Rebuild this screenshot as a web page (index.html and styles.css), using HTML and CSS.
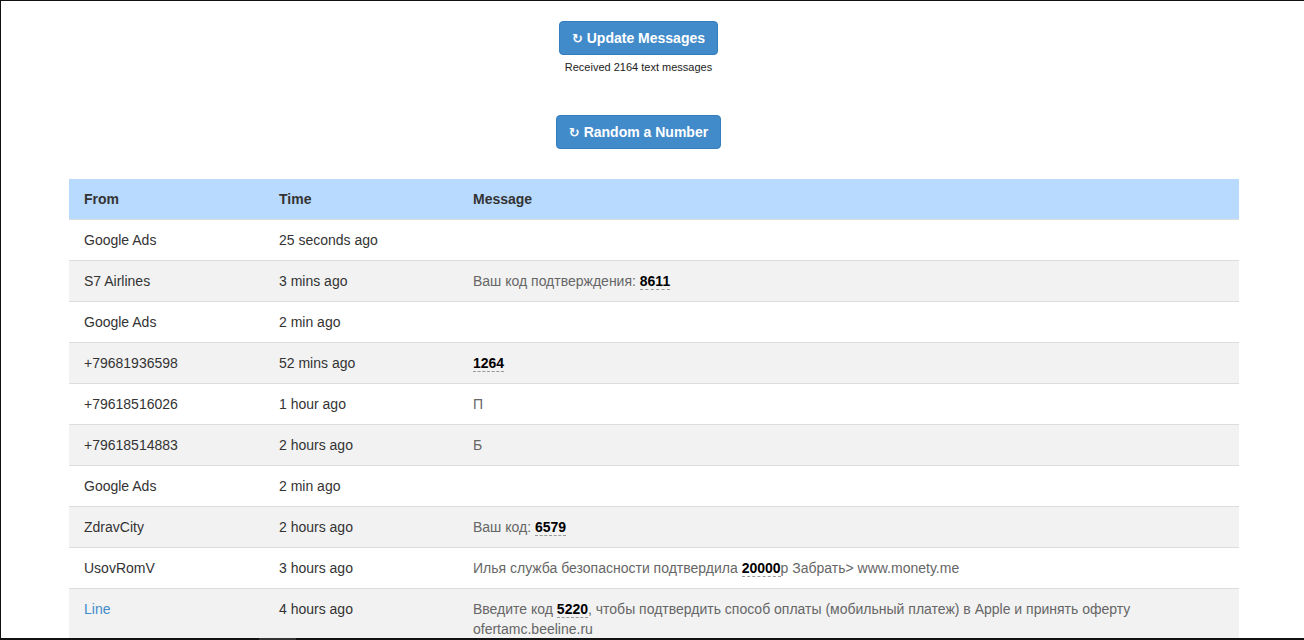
FILE: index.html
```html
<!DOCTYPE html>
<html lang="en">
<head>
<meta charset="utf-8">
<title>Messages</title>
<link rel="stylesheet" href="styles.css">
</head>
<body>
<div class="frame"><span class="thumb"></span></div>
<div class="actions">
  <button class="btn" type="button"><span class="ico">↻</span> Update Messages</button>
  <p class="count">Received 2164 text messages</p>
  <button class="btn btn-random" type="button"><span class="ico">↻</span> Random a Number</button>
</div>
<div class="wrap">
  <table class="msgs">
    <thead>
      <tr><th class="c-from">From</th><th class="c-time">Time</th><th>Message</th></tr>
    </thead>
    <tbody>
      <tr><td>Google Ads</td><td>25 seconds ago</td><td class="m"></td></tr>
      <tr><td>S7 Airlines</td><td>3 mins ago</td><td class="m">Ваш код подтверждения: <b class="code">8611</b></td></tr>
      <tr><td>Google Ads</td><td>2 min ago</td><td class="m"></td></tr>
      <tr><td>+79681936598</td><td>52 mins ago</td><td class="m"><b class="code">1264</b></td></tr>
      <tr><td>+79618516026</td><td>1 hour ago</td><td class="m">П</td></tr>
      <tr><td>+79618514883</td><td>2 hours ago</td><td class="m">Б</td></tr>
      <tr><td>Google Ads</td><td>2 min ago</td><td class="m"></td></tr>
      <tr><td>ZdravCity</td><td>2 hours ago</td><td class="m">Ваш код: <b class="code">6579</b></td></tr>
      <tr><td>UsovRomV</td><td>3 hours ago</td><td class="m">Илья служба безопасности подтвердила <b class="code">20000</b>р Забрать&gt; www.monety.me</td></tr>
      <tr><td><a class="link" href="#">Line</a></td><td>4 hours ago</td><td class="m">Введите код <b class="code">5220</b>, чтобы подтвердить способ оплаты (мобильный платеж) в Apple и принять оферту ofertamc.beeline.ru</td></tr>
    </tbody>
  </table>
</div>
</body>
</html>
```

FILE: styles.css
```css
html, body {
  margin: 0;
  padding: 0;
  background: #fff;
}
body {
  font-family: "Liberation Sans", Arial, "DejaVu Sans", sans-serif;
  font-size: 14px;
  line-height: 20px;
  color: #333;
  overflow: hidden;
  height: 640px;
}
.frame {
  position: fixed;
  inset: 0;
  border-top: 1px solid #111;
  border-left: 1px solid #111;
  border-bottom: 2px solid #111;
  pointer-events: none;
  z-index: 10;
}
.thumb {
  position: absolute;
  left: 258px;
  bottom: -2px;
  width: 37px;
  height: 2px;
  background: #333;
}
.actions {
  display: flex;
  flex-direction: column;
  align-items: center;
  padding: 21px 27px 0 0;
}
.btn {
  font-family: "Liberation Sans", Arial, sans-serif;
  font-weight: bold;
  font-size: 14px;
  line-height: 20px;
  color: #fff;
  background: #428bca;
  border: 1px solid #357ebd;
  border-radius: 4px;
  padding: 6px 12px;
  height: 34px;
  margin: 0;
}
.ico {
  font-family: "DejaVu Sans", sans-serif;
  font-weight: bold;
  font-size: 13px;
}
.count {
  margin: 5px 0 0;
  font-size: 11px;
  line-height: 15px;
  color: #222;
}
.btn-random {
  margin-top: 40px;
}
.wrap {
  width: 1170px;
  margin: 30px 0 0 69px;
}
.msgs {
  width: 100%;
  border-collapse: collapse;
  table-layout: fixed;
}
.msgs th, .msgs td {
  padding: 10px 15px;
  text-align: left;
  vertical-align: top;
  line-height: 20px;
}
.msgs th.c-from {
  width: 165px;
}
.msgs th.c-time {
  width: 164px;
}
.msgs thead th {
  background: #b8daff;
  font-weight: bold;
  color: #333;
}
.msgs tbody td {
  border-top: 1px solid #dddddd;
}
.msgs tbody tr:nth-child(even) td {
  background: #f2f2f2;
}
.msgs td.m {
  color: #666;
}
.code {
  color: #000;
  font-weight: bold;
  border-bottom: 1px dashed #999;
}
.link {
  color: #428bca;
  text-decoration: none;
}
```
